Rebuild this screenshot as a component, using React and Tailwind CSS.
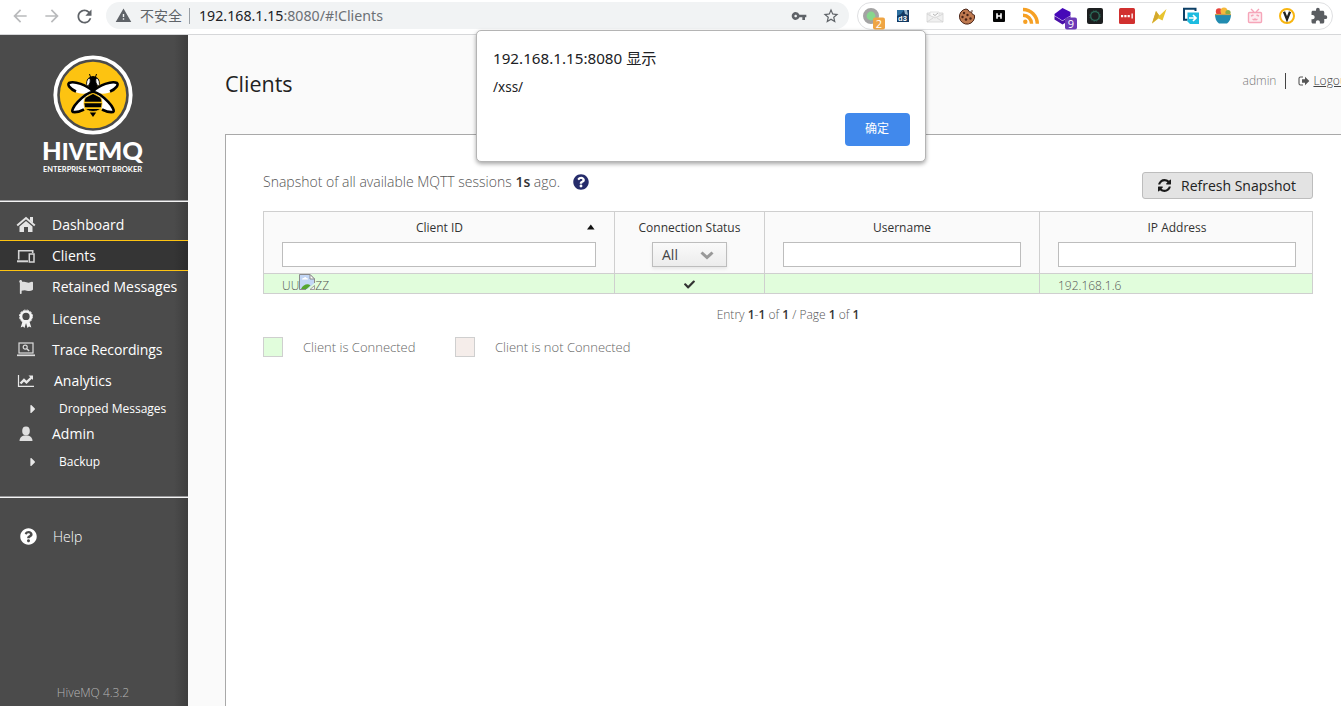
import React from "react";
import { FaQuestionCircle, FaFlag, FaCheck, FaCaretRight } from "react-icons/fa";
import { MdArrowBack, MdArrowForward, MdRefresh, MdWarning, MdVpnKey, MdStarBorder, MdExtension } from "react-icons/md";

function Ext({ children }) {
  return (
    <div className="flex w-8 shrink-0 items-center justify-center">
      <svg className="overflow-visible" width="24" height="28" viewBox="0 0 24 28">{children}</svg>
    </div>
  );
}

function Extensions() {
  return (
    <>
      <Ext>
        <circle cx="12" cy="14" r="6.2" fill="#87d68d" stroke="#a3a3a3" strokeWidth="3.6" />
        <rect x="14" y="15.500" width="12" height="12" rx="2" fill="#efa544" />
        <text x="20" y="25.500" textAnchor="middle" fontSize="11" fill="#fff" fontFamily="Open Sans">2</text>
      </Ext>
      <Ext>
        <rect x="6" y="8" width="12" height="12" fill="#123a63" />
        <path d="M6 14V8h7l-3 4z" fill="#2d6f9f" />
        <path d="M13 8h3l1 5-3-1z" fill="#9dbbd0" />
        <text x="11.500" y="18.500" textAnchor="middle" fontSize="7.500" fontWeight="700" fill="#fff" fontFamily="Liberation Sans">d3</text>
      </Ext>
      <Ext>
        <path d="M4 11h16v9H4z" fill="#f0f0f0" stroke="#d6d6d6" strokeWidth=".8" />
        <path d="M7 14V10h9v4" fill="#fafafa" stroke="#dcdcdc" strokeWidth=".8" />
        <path d="M4 12l8 4 8-4M4 20l6-4M20 20l-6-4" fill="none" stroke="#d2d2d2" strokeWidth=".8" />
        <path d="M10 12l2 1.500 3-2.500" fill="none" stroke="#b5b5b5" strokeWidth="1" />
      </Ext>
      <Ext>
        <path d="M11 7l2 .8 1.3 2 2.2.4 1 2.2 2 .8a7.6 7.6 0 1 1-8.5-6.2z" fill="#c07a50" stroke="#4a2417" strokeWidth="1" />
        <g fill="#4a2417">
          <circle cx="9" cy="11" r="1.2" /><circle cx="12.5" cy="13" r="1.2" /><circle cx="7.5" cy="15" r="1.2" />
          <circle cx="11" cy="17.5" r="1.3" /><circle cx="15.5" cy="16.5" r="1.2" /><circle cx="17" cy="9" r=".8" />
        </g>
      </Ext>
      <Ext>
        <rect x="6" y="8" width="12" height="12" rx="1" fill="#050505" />
        <path d="M10 11.2v5.6M14 11.2v5.6M10 14h4" stroke="#fff" strokeWidth="1.6" fill="none" />
      </Ext>
      <Ext>
        <circle cx="6.3" cy="19.7" r="2.2" fill="#f6a024" />
        <path d="M4 13.200a8.600 8.600 0 0 1 8.600 8.600M4 7.500A14.300 14.300 0 0 1 18.300 21.800" fill="none" stroke="#f6a024" strokeWidth="3.400" />
      </Ext>
      <Ext>
        <path d="M3.500 14l8 5 8-5v3.500l-8 5-8-5z" fill="#4a0fa8" />
        <path d="M3.500 12l8-6 8 4v3.500l-8 5-8-5z" fill="#4608b8" />
        <rect x="14" y="15.500" width="12" height="12" rx="2" fill="#6b39b7" />
        <text x="20" y="25.500" textAnchor="middle" fontSize="11" fill="#fff" fontFamily="Open Sans">9</text>
      </Ext>
      <Ext>
        <rect x="4" y="6" width="16" height="16" rx="2" fill="#1d1f20" />
        <circle cx="12" cy="14" r="4.300" fill="none" stroke="#2c6d5a" strokeWidth="1.300" />
        <circle cx="12" cy="14" r="5.200" fill="none" stroke="#2c6d5a" strokeWidth=".8" strokeDasharray="1.500 1.200" />
      </Ext>
      <Ext>
        <rect x="4" y="6" width="16" height="16" rx="1.5" fill="#d1302f" />
        <path d="M6 13h2.200v2.200H6zM9.300 13h2.200v2.200H9.300zM12.600 13h2.200v2.200h-2.200zM16.500 11.500h1.300v5h-1.300z" fill="#fff" />
      </Ext>
      <Ext>
        <path d="M9 9l3.500 4.500L19.500 7 15.500 18.500 11.500 16.500 5 21.500z" fill="#e8c42e" />
        <path d="M9 9l3 4.500-1.500 3L5 21.500z" fill="#d3a82f" />
      </Ext>
      <Ext>
        <path d="M16.500 9V6.800H5v11h3.500" fill="none" stroke="#0c3f66" strokeWidth="2" />
        <path d="M8.500 10.500H20v11.500H11l-2.500-2.500z" fill="#1dbce0" />
        <path d="M10 16h7M14 13l3 3-3 3" fill="none" stroke="#fff" strokeWidth="1.700" />
      </Ext>
      <Ext>
        <circle cx="8" cy="9.500" r="3.200" fill="#e7443c" />
        <circle cx="13" cy="9" r="3.500" fill="#f6b93c" />
        <circle cx="17" cy="10.500" r="2.600" fill="#87ad45" />
        <path d="M4 12.500h16q0 6-4 9H8q-4-3-4-9z" fill="#218bb0" />
        <path d="M4 12.500h16" stroke="#c9a24c" strokeWidth="1.200" />
      </Ext>
      <Ext>
        <g fill="none" stroke="#f6a5b9" strokeWidth="1.400">
          <rect x="5.500" y="10.500" width="13" height="10" rx="1" fill="#fdecf0" />
          <path d="M8 7l3 3M16 7l-3 3M8 14l2.500-1M16 14l-2.500-1M9.500 17l1.500.8 1-.8 1 .8 1.500-.8" />
        </g>
      </Ext>
      <Ext>
        <circle cx="12" cy="14" r="7" fill="#fff" stroke="#f8b50f" strokeWidth="2" />
        <path d="M9 9.800l3 7.500 3-7.500" fill="none" stroke="#222" strokeWidth="2.300" />
      </Ext>
      <div className="flex w-8 shrink-0 items-center justify-center">
        <MdExtension size={18} color="#5a5d61" />
      </div>
    </>
  );
}

function BrowserBar() {
  return (
    <header className="flex h-[35px] shrink-0 items-start border-b border-[#d6d7d9] bg-white font-['Noto_Sans','Noto_Sans_CJK_SC',sans-serif]">
      <div className="flex h-8 items-center">
        <div className="flex w-[40px] justify-center"><MdArrowBack size={20} color="#b9babc" /></div>
        <div className="flex w-[24px] justify-center"><MdArrowForward size={20} color="#b9babc" /></div>
        <div className="flex w-[42px] justify-center pr-[2px]"><MdRefresh size={21} color="#5f6368" /></div>
      </div>
      <div className="mt-[2px] flex h-[27px] w-[743px] items-center rounded-full bg-[#f1f3f4] pr-[9px] pl-[9px] text-[14.200px] whitespace-nowrap">
        <MdWarning size={17} color="#5f6368" />
        <span className="ml-[8px] w-[42px] text-[14px] text-[#5f6368]">不安全</span>
        <span className="ml-[7px] h-4 w-px bg-[#9aa0a6]" />
        <span className="ml-[9px] text-[#6c7075]"><span className="text-[#202124]">192.168.1.15</span>:8080/#!Clients</span>
        <div className="ml-auto flex items-center gap-[15px]">
          <MdVpnKey size={16} color="#5f6368" />
          <MdStarBorder size={18} color="#5f6368" />
        </div>
      </div>
      <div className="mt-[2px] ml-[8px] flex h-[28px] w-[476px] items-center rounded-full border border-[#dfe0e2]">
        <div className="-ml-[3px] flex"><Extensions /></div>
      </div>
    </header>
  );
}

function Logo() {
  return (
    <svg className="block" width="188" height="165" viewBox="0 0 188 165">
      <circle cx="93" cy="60" r="37.700" fill="#4b4b4b" stroke="#fff" strokeWidth="3.800" />
      <circle cx="93" cy="60" r="33.200" fill="#fdc311" />
      <path d="M92 56C86 47 68 45 68.500 50.500 70 57 84 62 92 56z" fill="#fff" />
      <path d="M94 56C100 47 118 45 117.500 50.500 116 57 102 62 94 56z" fill="#fff" />
      <path d="M91 57C78 60 70 75 73 76.500 78 77 83 75 85 73V65z" fill="#fff" />
      <path d="M95 57C108 60 116 75 113 76.500 108 77 103 75 101 73V65z" fill="#fff" />
      <g fill="none" stroke="#000" strokeWidth="2.600" strokeLinejoin="round">
        <path d="M76 56.500C70 54 67 49.500 69 48 74 45.500 87 50 93 56.500 83 59 69 75 73 77 76 77.500 80 76.500 84 74.500" />
        <path d="M110 56.500C116 54 119 49.500 117 48 112 45.500 99 50 93 56.500 103 59 117 75 113 77 110 77.500 106 76.500 102 74.500" />
      </g>
      <path d="M93 58.500l7.500 4q1.500 2 1.500 6 0 4-2 6-3 2-7 2t-7-2q-2-2-2-6 0-4 1.500-6z" fill="#000" stroke="#fdc311" strokeWidth=".8" />
      <path d="M84 67.500h18M85 73.200h16" stroke="#fdc311" strokeWidth="1.700" />
      <path d="M89.800 77.500h6.400L93 82z" fill="#000" />
      <circle cx="93" cy="47" r="6" fill="#000" />
      <path d="M90.500 42l-1-3M95.500 42l1-3" stroke="#000" strokeWidth="1" />
      <ellipse cx="88.400" cy="47" rx="1.700" ry="3.700" fill="#fff" stroke="#000" strokeWidth=".8" transform="rotate(12 88.400 47)" />
      <ellipse cx="97.600" cy="47" rx="1.700" ry="3.700" fill="#fff" stroke="#000" strokeWidth=".8" transform="rotate(-12 97.600 47)" />
      <path d="M88 51.500l5 5.500 5-5.500z" fill="#000" />
      <text x="42" y="124.500" fill="#fff" fontFamily="Lato" fontWeight="900" fontSize="24.500" textLength="101" lengthAdjust="spacingAndGlyphs">H<tspan fontSize="22">IVE</tspan>MQ</text>
      <text x="43" y="136.700" fill="#fff" fontFamily="Lato" fontWeight="700" fontSize="7.800" textLength="99" lengthAdjust="spacingAndGlyphs">ENTERPRISE MQTT BROKER</text>
    </svg>
  );
}

const HomeIcon = () => (
  <svg width="20" height="17" viewBox="0 0 20 17" fill="#e4e4e4">
    <path d="M10 5l6.500 5.500V16h-4.500v-5H8v5H3.500v-5.500z" />
    <path d="M1.200 9.500L10 2l8.800 7.500" fill="none" stroke="#e4e4e4" strokeWidth="2" />
    <path d="M14 1h3v6l-3-2.500z" />
  </svg>
);
const DevicesIcon = () => (
  <svg width="20" height="16" viewBox="0 0 20 16" fill="none" stroke="#d6d6d6">
    <path d="M2.700 11.500V2.700h14V5" strokeWidth="1.600" />
    <path d="M1 13.300h11" strokeWidth="2" />
    <rect x="13.300" y="6" width="4.700" height="8" strokeWidth="1.500" />
  </svg>
);
const LicenseIcon = () => (
  <svg width="18" height="20" viewBox="0 0 18 20">
    <path d="M6 11l-2.300 7.500 2.300-1 1.500 1.500L9 14l1.500 5 1.500-1.500 2.300 1L12 11z" fill="#f4f4f4" />
    <circle cx="9" cy="7.500" r="5" fill="none" stroke="#f4f4f4" strokeWidth="2.700" />
    <circle cx="9" cy="7.500" r="6.500" fill="none" stroke="#f4f4f4" strokeWidth="1" strokeDasharray="2 1.400" />
  </svg>
);
const TraceIcon = () => (
  <svg width="20" height="15" viewBox="0 0 20 15" fill="none" stroke="#dcdcdc">
    <rect x="3" y="1" width="14" height="10" strokeWidth="1.200" />
    <path d="M1 13.300h18" strokeWidth="1.700" />
    <circle cx="9.200" cy="5.200" r="2" strokeWidth="1.200" />
    <path d="M10.800 6.800l2.400 2.200" strokeWidth="1.500" />
  </svg>
);
const ChartIcon = () => (
  <svg width="18" height="14" viewBox="0 0 18 14" fill="none" stroke="#e8e8e8">
    <path d="M1.500 1v11.300H17" strokeWidth="1.200" />
    <path d="M3.500 9.500l3.500-3.500 2.500 2.300L14.500 3.500" strokeWidth="2.400" />
    <path d="M11.500 1.500H16V6z" fill="#e8e8e8" stroke="none" />
  </svg>
);
const UserIcon = () => (
  <svg width="16" height="16" viewBox="0 0 16 16" fill="#dedede">
    <ellipse cx="8" cy="5" rx="3.800" ry="4.400" />
    <path d="M1.500 15q0-4.500 4.500-5.500h4q4.500 1 4.500 5.500z" />
  </svg>
);

function NavItem({ icon, label, className, labelClass = "" }) {
  return (
    <div className={"flex shrink-0 items-center text-[14px] text-white " + className}>
      <span className="flex w-[52px] justify-center">{icon}</span>
      <span className={"whitespace-nowrap " + labelClass}>{label}</span>
    </div>
  );
}

function SubItem({ label, className }) {
  return (
    <div className={"flex shrink-0 items-center text-[12px] text-white " + className}>
      <span className="flex w-[59px] justify-center pl-[6px]"><FaCaretRight size={14} color="#e8e8e8" /></span>
      <span className="whitespace-nowrap">{label}</span>
    </div>
  );
}

function Sidebar() {
  return (
    <aside className="flex w-[188px] shrink-0 flex-col bg-[linear-gradient(90deg,#4b4b4b_0,#4b4b4b_174px,#3e3e3e_188px)]">
      <Logo />
      <div className="h-[2px] shrink-0 border-t border-[#99999b] bg-[#f4f4f4]" />
      <nav className="flex h-[294px] shrink-0 flex-col pt-[7px]">
        <NavItem icon={<HomeIcon />} label="Dashboard" className="h-[31px]" />
        <NavItem icon={<DevicesIcon />} label="Clients" className="h-[31px] border-y border-[#fdc311] bg-[linear-gradient(90deg,#353535_0,#353535_174px,#2c2c2c_188px)]" />
        <NavItem icon={<FaFlag size={14} color="#dedede" />} label="Retained Messages" className="h-[32px] pb-px" />
        <NavItem icon={<LicenseIcon />} label="License" className="h-[31px]" />
        <NavItem icon={<TraceIcon />} label="Trace Recordings" className="h-[31px]" labelClass="tracking-[-0.08px]" />
        <NavItem icon={<ChartIcon />} label="Analytics" className="h-[31px]" labelClass="pl-[2px]" />
        <SubItem label="Dropped Messages" className="h-[25px]" />
        <NavItem icon={<UserIcon />} label="Admin" className="h-[26px] pb-px" />
        <SubItem label="Backup" className="h-[29px]" />
      </nav>
      <div className="h-[2px] shrink-0 border-t border-[#99999b] bg-[#f4f4f4]" />
      <div className="mt-[23px] flex h-[30px] items-center text-[14px] font-light text-white">
        <span className="flex w-[53px] justify-center pl-[3px]"><FaQuestionCircle size={17} color="#fff" /></span>
        <span>Help</span>
      </div>
      <div className="mt-auto pr-[2px] pb-[5px] text-center text-[12px] leading-[17px] font-light text-[#b5b5b5]">HiveMQ 4.3.2</div>
    </aside>
  );
}

const RefreshIcon = () => (
  <svg width="13" height="13" viewBox="0 0 1536 1536" fill="#1a1a1a">
    <path d="M1511 928q0 5-1 7-64 268-268 434.500T764 1536q-146 0-282.500-55T238 1324l-129 129q-19 19-45 19t-45-19-19-45V960q0-26 19-45t45-19h448q26 0 45 19t19 45-19 45l-137 137q71 66 161 102t187 36q134 0 250-65t186-179q11-17 53-117 8-23 30-23h192q13 0 22.500 9.500t9.500 22.500zm25-800v448q0 26-19 45t-45 19h-448q-26 0-45-19t-19-45 19-45l138-138Q969 256 768 256q-134 0-250 65T332 500q-11 17-53 117-8 23-30 23H50q-13 0-22.500-9.500T18 608v-7q65-268 270-434.500T768 0q146 0 284 55.500T1297 212l130-129q19-19 45-19t45 19 19 45z" />
  </svg>
);

const LogoutIcon = () => (
  <svg width="12" height="10" viewBox="0 0 12 10">
    <path d="M5 1H2.500Q1 1 1 2.500v5Q1 9 2.500 9H5" fill="none" stroke="#555" strokeWidth="1.100" />
    <path d="M4 3.200h3V.800L11.300 5 7 9.200V6.800H4z" fill="#555" />
  </svg>
);

const BrokenImage = () => (
  <svg className="shrink-0" width="16" height="16" viewBox="0 0 16 16">
    <path d="M.5.500H11L15.500 5v4L8 15.500H.500z" fill="#c2d6f5" />
    <path d="M15.500 9V5L11 .500H.500v15H7" fill="none" stroke="#8b8b8b" />
    <path d="M11 .500V5h4.500z" fill="#fff" stroke="#8b8b8b" />
    <path d="M3 5.500q0-2 2-1.500 1-2 2.500 0 2 0 1.500 1.500z" fill="#fff" />
    <path d="M2 15q3-5.500 8-4.500l1.500 1L7.500 15z" fill="#55a630" />
    <path d="M15.500 11.500v4H11z" fill="#eee" stroke="#8b8b8b" strokeWidth=".8" />
  </svg>
);

function HeaderCell({ title, sorted, className, children }) {
  return (
    <div className={"flex shrink-0 flex-col items-center border-r border-[#cfcfcf] px-[18px] pt-[7px] " + className}>
      <div className="flex h-[18px] w-full items-center justify-center text-[12px] text-[#333]">
        {sorted && <span className="w-[11px]" />}
        <span className="flex-1 text-center whitespace-nowrap">{title}</span>
        {sorted && <svg className="-mt-[2px]" width="10" height="6" viewBox="0 0 10 6"><path d="M1 5.500L4.800.500 8.600 5.500z" fill="#111" /></svg>}
      </div>
      <div className="mt-[5px] flex w-full justify-center">{children}</div>
    </div>
  );
}

const Field = () => <div className="h-[25px] w-full border border-[#bdbdbd] bg-white" />;

function ClientsTable() {
  return (
    <div className="mt-[12px] flex w-[1050px] flex-col border-t border-l border-[#cfcfcf]">
      <div className="flex h-[62px] border-b border-[#cfcfcf] bg-[#fafafa]">
        <HeaderCell title="Client ID" sorted className="w-[351px]"><Field /></HeaderCell>
        <HeaderCell title="Connection Status" className="w-[150px]">
          <div className="flex h-[25px] w-[75px] shrink-0 items-center justify-between border border-[#bdbdbd] bg-gradient-to-b from-[#fafafa] to-[#ececec] pr-[12px] pl-[9px] text-[14px] text-[#444] shadow-[0_2px_3px_rgba(0,0,0,0.08)]">
            <span>All</span>
            <svg className="mt-[2px]" width="14" height="9" viewBox="0 0 14 9"><path d="M1.500 1.500L7 6.500l5.500-5" fill="none" stroke="#999" strokeWidth="3" /></svg>
          </div>
        </HeaderCell>
        <HeaderCell title="Username" className="w-[275px]"><Field /></HeaderCell>
        <HeaderCell title="IP Address" className="w-[273px] pr-[16px]"><Field /></HeaderCell>
      </div>
      <div className="flex h-[20px] border-b border-[#cfcfcf] bg-[#e1fddc] text-[12px] font-light text-[#555]">
        <div className="flex w-[351px] border-r border-[#cfcfcf] pl-[18px]">
          <span className="leading-[23px]">UU</span><BrokenImage /><span className="leading-[23px]">ZZ</span>
        </div>
        <div className="flex w-[150px] items-center justify-center border-r border-[#cfcfcf] pt-[2px] pr-[1px]"><FaCheck size={11} color="#333" /></div>
        <div className="w-[275px] border-r border-[#cfcfcf]" />
        <div className="w-[273px] border-r border-[#cfcfcf] pl-[18px] leading-[23px]">192.168.1.6</div>
      </div>
    </div>
  );
}

const B = ({ children }) => <b className="font-semibold text-[#333]">{children}</b>;

function Main() {
  return (
    <main className="flex min-w-0 flex-1 flex-col bg-[#fafafa] pl-[37px]">
      <div className="flex h-[99px] shrink-0 items-start">
        <h1 className="mt-[34px] text-[21.500px] leading-[30px] text-[#222]">Clients</h1>
        <div className="mt-[37px] ml-auto flex h-[18px] shrink-0 items-center text-[12px] whitespace-nowrap">
          <span className="font-light text-[#777]">admin</span>
          <span className="ml-[9px] h-[16px] w-px bg-[#444]" />
          <span className="ml-[12px]"><LogoutIcon /></span>
          <span className="-mr-[10px] ml-[3px] font-light text-[#444] underline">Logout</span>
        </div>
      </div>
      <section className="flex flex-1 flex-col border-t border-l border-[#a9a9a9] bg-white pt-[37px] pl-[37px]">
        <div className="flex h-[27px] w-[1050px] items-center">
          <p className="-mt-[9px] text-[14px] font-light whitespace-nowrap text-[#555]">Snapshot of all available MQTT sessions <B>1s</B> ago.</p>
          <FaQuestionCircle className="-mt-[8px] ml-[13px]" size={16} color="#262c6b" />
          <div className="ml-auto flex h-[27px] w-[171px] items-center rounded-[3px] border border-[#bdbdbd] bg-[#e3e3e3] pl-[15px] text-[14px] text-[#222]">
            <RefreshIcon /><span className="ml-[10px] whitespace-nowrap">Refresh Snapshot</span>
          </div>
        </div>
        <ClientsTable />
        <div className="mt-[12px] w-[1050px] text-center text-[12px] leading-[18px] font-light text-[#555]">
          Entry <B>1</B>-<B>1</B> of <B>1</B> / Page <B>1</B> of <B>1</B>
        </div>
        <div className="mt-[13px] flex h-[20px] items-center text-[13px] font-light whitespace-nowrap text-[#666]">
          <span className="h-[20px] w-[20px] border border-[#cfcfcf] bg-[#e1fddc]" />
          <span className="ml-[20px] w-[152px] pt-[2px]">Client is Connected</span>
          <span className="h-[20px] w-[20px] border border-[#cfcfcf] bg-[#f5edea]" />
          <span className="ml-[20px] pt-[2px]">Client is not Connected</span>
        </div>
      </section>
    </main>
  );
}

function AlertDialog() {
  return (
    <div className="absolute top-[30px] left-[476px] flex h-[132px] w-[450px] flex-col rounded-[5px] border border-[#b4b4b4] bg-white px-[16px] pt-[16px] font-['Noto_Sans','Noto_Sans_CJK_SC',sans-serif] text-[#202124] shadow-[0_2px_4px_rgba(0,0,0,0.35)]">
      <div className="h-[22px] text-[15.200px] leading-[22px]">192.168.1.15:8080 显示</div>
      <div className="mt-[9px] h-[18px] text-[13.500px] leading-[18px]">/xss/</div>
      <button className="mt-[16.500px] -mr-[0.500px] h-[33px] w-[65px] self-end rounded-[4px] bg-[#4189ec] text-[12px] text-white">确定</button>
    </div>
  );
}

export default function App() {
  return (
    <div className="relative flex h-[706px] w-[1341px] flex-col overflow-hidden font-['Open_Sans',sans-serif]">
      <BrowserBar />
      <div className="flex min-h-0 flex-1">
        <Sidebar />
        <Main />
      </div>
      <AlertDialog />
    </div>
  );
}
